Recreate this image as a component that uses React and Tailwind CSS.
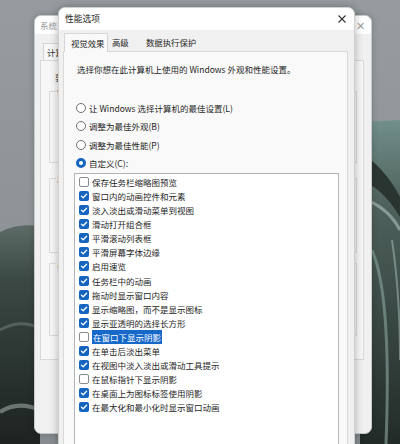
import React from "react";

const FONT = { fontFamily: '"Noto Sans CJK SC", "Noto Sans", sans-serif' };

function Check({ checked }) {
  if (checked)
    return (
      <span className="w-[10px] h-[10px] rounded-[2px] bg-[#1565c0] flex items-center justify-center shrink-0">
        <svg width="8" height="8" viewBox="0 0 8 8">
          <path d="M1.4 4.1 L3.2 5.8 L6.6 2.2" stroke="white" strokeWidth="1.3" fill="none" strokeLinecap="round" strokeLinejoin="round" />
        </svg>
      </span>
    );
  return <span className="w-[10px] h-[10px] rounded-[2px] border border-[#8c8c8c] bg-white shrink-0" />;
}

function Radio({ on }) {
  return on ? (
    <span className="w-[10px] h-[10px] rounded-full border-[3px] border-[#1565c0] bg-white shrink-0" />
  ) : (
    <span className="w-[10px] h-[10px] rounded-full border border-[#707070] bg-white shrink-0" />
  );
}

const items = [
  ["保存任务栏缩略图预览", false],
  ["窗口内的动画控件和元素", true],
  ["淡入淡出或滑动菜单到视图", true],
  ["滑动打开组合框", true],
  ["平滑滚动列表框", true],
  ["平滑屏幕字体边缘", true],
  ["启用速览", true],
  ["任务栏中的动画", true],
  ["拖动时显示窗口内容", true],
  ["显示缩略图，而不是显示图标", true],
  ["显示亚透明的选择长方形", true],
  ["在窗口下显示阴影", false, true],
  ["在单击后淡出菜单", true],
  ["在视图中淡入淡出或滑动工具提示", true],
  ["在鼠标指针下显示阴影", false],
  ["在桌面上为图标标签使用阴影", true],
  ["在最大化和最小化时显示窗口动画", true],
];

const radios = [
  ["让 Windows 选择计算机的最佳设置(L)", false],
  ["调整为最佳外观(B)", false],
  ["调整为最佳性能(P)", false],
  ["自定义(C):", true],
];

function Wallpaper() {
  return (
    <svg className="absolute inset-0" width="400" height="444" viewBox="0 0 400 444">
      <defs>
        <linearGradient id="sky" x1="0" y1="0" x2="0" y2="1">
          <stop offset="0" stopColor="#959b9e" />
          <stop offset="1" stopColor="#868c8f" />
        </linearGradient>
        <linearGradient id="lg" x1="0" y1="0" x2="0" y2="1">
          <stop offset="0" stopColor="#5d6b66" />
          <stop offset="0.25" stopColor="#3b4944" />
          <stop offset="0.6" stopColor="#2c3632" />
          <stop offset="1" stopColor="#1d2321" />
        </linearGradient>
        <linearGradient id="rg" x1="0" y1="0" x2="0" y2="1">
          <stop offset="0" stopColor="#728f8a" />
          <stop offset="0.25" stopColor="#4f625d" />
          <stop offset="1" stopColor="#222b28" />
        </linearGradient>
      </defs>
      <rect width="400" height="444" fill="url(#sky)" />
      <path d="M0 232 C 12 226, 24 224, 40 226 L40 444 L0 444 Z" fill="url(#lg)" />
      <path d="M0 330 C 14 322, 26 322, 40 328" stroke="#6b7a75" strokeWidth="3" fill="none" opacity="0.6" />
      <path d="M0 412 C 12 404, 26 404, 40 410" stroke="#8a9591" strokeWidth="4" fill="none" opacity="0.7" />
      <path d="M360 122 L400 120 L400 444 L360 444 Z" fill="url(#rg)" />
      <path d="M360 152 C 375 162, 388 174, 400 197 L400 217 C 388 197, 374 184, 360 180 Z" fill="#2a3532" />
      <path d="M366 200 C 380 205, 392 215, 400 230" stroke="#a2b4ae" strokeWidth="3" fill="none" opacity="0.7" />
      <path d="M372 250 C 385 280, 390 340, 386 444" stroke="#7f9993" strokeWidth="3" fill="none" opacity="0.7" />
      <path d="M392 240 C 398 280, 400 320, 400 360" stroke="#9bb1ab" strokeWidth="2" fill="none" opacity="0.6" />
    </svg>
  );
}

function BackWindow() {
  return (
    <div className="absolute left-[34px] top-[15px] w-[338px] h-[419px] rounded-[7px] bg-[#f0f0f0] border border-[#c9c9c9] shadow-[0_0_6px_rgba(0,0,0,0.2)] overflow-hidden flex flex-col">
      <div className="h-[18px] bg-white flex items-center justify-between pl-[5px] pr-[6px] shrink-0">
        <span className="text-[8.5px] leading-none text-[#9a9a9a]">系统</span>
        <span className="text-[11px] leading-none text-[#a0a0a0]">✕</span>
      </div>
      <div className="flex pl-[8px] pt-[9px] shrink-0">
        <div className="h-[17px] px-[3px] flex items-center text-[8.5px] text-[#333] border border-b-0 border-[#d4d4d4] bg-[#f7f7f7]">计算机名</div>
      </div>
      <div className="ml-[5px] mr-[7px] h-[300px] border border-[#d8d8d8] bg-[#f7f7f7] flex flex-col pl-[14px] pt-[10px] text-[8.5px] text-[#444]">
        <div className="h-[12px] leading-[12px]">要</div>
        <div className="mt-[8px] ml-[-6px] mr-[6px] h-[72px] border border-[#dcdcdc] pl-[6px] text-[#666] leading-[12px]"><span className="relative top-[-7px] bg-[#f7f7f7] px-[1px]">性能</span></div>
        <div className="mt-[15px] ml-[-6px] mr-[6px] h-[75px] border border-[#dcdcdc] pl-[6px] text-[#666] leading-[12px]"><span className="relative top-[-7px] bg-[#f7f7f7] px-[1px]">用户</span></div>
        <div className="mt-[10px] ml-[-6px] mr-[6px] h-[73px] border border-[#dcdcdc] pl-[6px] text-[#666] leading-[12px]"><span className="relative top-[-7px] bg-[#f7f7f7] px-[1px]">启动</span></div>
      </div>
    </div>
  );
}

function FrontWindow() {
  return (
    <div className="absolute left-[58px] top-[7px] w-[297px] h-[460px] rounded-t-[7px] bg-[#f0f0f0] border border-[#cfcfcf] shadow-[0_0_8px_rgba(0,0,0,0.28)] overflow-hidden flex flex-col text-[#1e1e1e]">
      <div className="h-[22px] bg-white flex items-center justify-between pl-[6px] pr-[5px] shrink-0">
        <span className="text-[8.75px] leading-none">性能选项</span>
        <svg width="14" height="14" viewBox="0 0 14 14">
          <path d="M3.5 3.5 L10.5 10.5 M10.5 3.5 L3.5 10.5" stroke="#333" strokeWidth="1.1" />
        </svg>
      </div>
      <div className="h-[21px] flex items-end pl-[5px] text-[8.4px] shrink-0">
        <div className="relative z-10 mb-[-1px] h-[19px] w-[44px] pl-[6px] flex items-center border border-b-0 border-[#d6d6d6] bg-[#f9f9f9]">视觉效果</div>
        <div className="h-[17px] w-[34px] pl-[4px] flex items-center">高级</div>
        <div className="h-[17px] pl-[4px] flex items-center">数据执行保护</div>
      </div>
      <div className="ml-[4px] mr-[6px] flex-1 border border-[#d9d9d9] bg-[#f9f9f9] flex flex-col">
        <div className="pt-[11px] pl-[13px] h-[24px] text-[8.5px] leading-[13px] whitespace-nowrap">
          选择你想在此计算机上使用的 Windows 外观和性能设置。
        </div>
        <div className="mt-[23px] flex flex-col pl-[12px]">
          {radios.map(([t, on]) => (
            <div key={t} className="h-[18.3px] flex items-center gap-[3px] text-[8.5px] leading-[12px] whitespace-nowrap">
              <Radio on={on} />
              <span>{t}</span>
            </div>
          ))}
        </div>
        <div className="mt-[1px] ml-[10px] mr-[8px] h-[290px] border border-[#b4b4b4] bg-white pt-[1px] pl-[4px] flex flex-col">
          {items.map(([t, c, sel]) => (
            <div key={t} className="h-[14.06px] flex items-center gap-[3px] text-[8.5px] leading-[12px] whitespace-nowrap">
              <Check checked={c} />
              {sel ? (
                <span className="bg-[#1668c9] text-white px-[1px] py-[1px]">{t}</span>
              ) : (
                <span>{t}</span>
              )}
            </div>
          ))}
        </div>
      </div>
    </div>
  );
}

export default function App() {
  return (
    <div className="relative w-[400px] h-[444px] overflow-hidden" style={FONT}>
      <Wallpaper />
      <BackWindow />
      <FrontWindow />
    </div>
  );
}
